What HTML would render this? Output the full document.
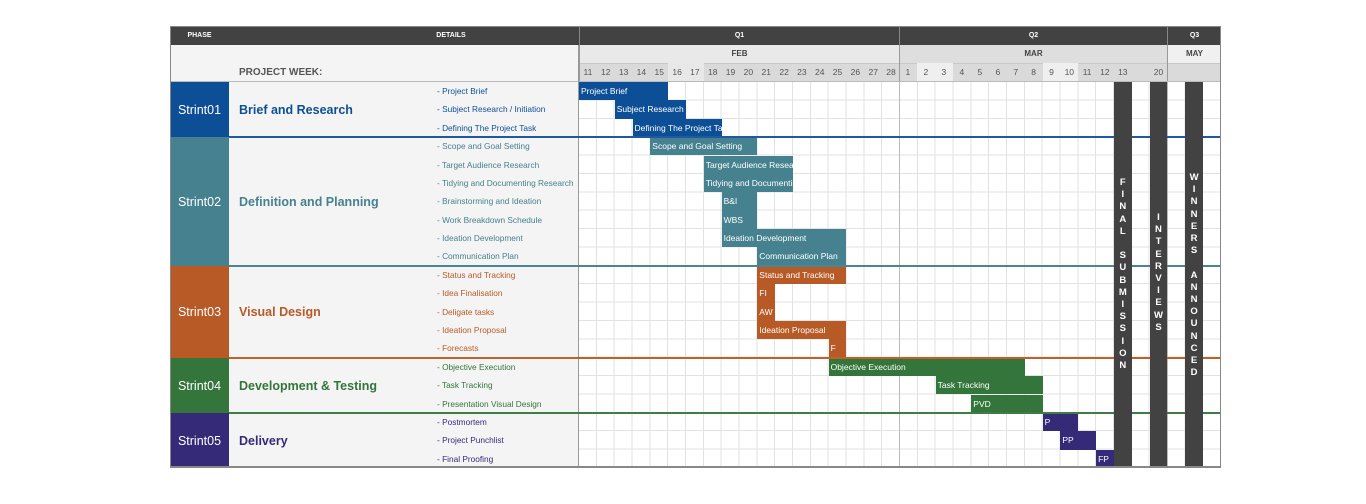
<!DOCTYPE html>
<html><head><meta charset="utf-8">
<style>
*{margin:0;padding:0;box-sizing:border-box}
body{width:1366px;height:504px;background:#fff;position:relative;overflow:hidden;font-family:"Liberation Sans",Arial,sans-serif}
.a{position:absolute}
.hdr{background:#424242;color:#fff;font-weight:bold;font-size:7px;text-align:center;line-height:19px}
.grid{left:579px;top:82px;width:642px;height:386px;background-color:#fff;
background-image:repeating-linear-gradient(to right,transparent 0,transparent 16.83px,#e2e2e2 16.83px,#e2e2e2 17.833px),
repeating-linear-gradient(to bottom,transparent 0,transparent 17.38px,#e2e2e2 17.38px,#e2e2e2 18.381px)}
.bar{position:absolute;color:#fff;font-size:8.5px;line-height:18px;padding-left:2px;white-space:nowrap;overflow:hidden;height:18.4px}
.det{position:absolute;left:437px;font-size:8.3px;line-height:18.4px;white-space:nowrap}
.ph{position:absolute;left:170px;width:59px;color:#fff;font-size:12.5px;display:flex;align-items:center;justify-content:center}
.tt{position:absolute;left:239px;font-size:12.5px;font-weight:bold;display:flex;align-items:center}
.sep{position:absolute;left:229px;width:992px;height:2px}
.vb{position:absolute;top:82px;height:386px;width:17.8px;background:#424242;color:#fff;font-weight:bold;font-size:9.5px;text-align:center;line-height:12.2px}
.wk{position:absolute;top:63px;height:19px;width:17.83px;font-size:8.5px;color:#555;text-align:center;line-height:19px}
</style></head><body>
<!-- left bg -->
<div class="a" style="left:170px;top:26px;width:409px;height:442px;background:#f4f4f4"></div>
<!-- header row -->
<div class="a hdr" style="left:170px;top:26px;width:1051px;height:19px"></div>
<div class="a hdr" style="left:170px;top:26px;width:59px;height:19px">PHASE</div>
<div class="a hdr" style="left:420px;top:26px;width:62px;height:19px">DETAILS</div>
<div class="a hdr" style="left:579px;top:26px;width:320px;height:19px;border-left:1px solid #888">Q1</div>
<div class="a hdr" style="left:899px;top:26px;width:268px;height:19px;border-left:1px solid #888">Q2</div>
<div class="a hdr" style="left:1167px;top:26px;width:54px;height:19px;border-left:1px solid #888">Q3</div>
<!-- month row -->
<div class="a" style="left:579px;top:45px;width:320px;height:18px;background:#e9e9e9;border-left:1px solid #999;font-size:8px;font-weight:bold;color:#444;text-align:center;line-height:18px">FEB</div>
<div class="a" style="left:899px;top:45px;width:268px;height:18px;background:#dedede;border-left:1px solid #999;font-size:8px;font-weight:bold;color:#444;text-align:center;line-height:18px">MAR</div>
<div class="a" style="left:1167px;top:45px;width:54px;height:18px;background:#f0f0f0;border-left:1px solid #999;font-size:8px;font-weight:bold;color:#444;text-align:center;line-height:18px">MAY</div>
<!-- week row -->
<div class="a" style="left:579px;top:63px;width:642px;height:19px;background:#dadada;border-top:1px solid #c8c8c8"></div>
<div class="a" style="left:668.2px;top:63px;width:35.7px;height:19px;background:#e8e8e8"></div>
<div class="a" style="left:917px;top:63px;width:35.7px;height:19px;background:#efefef"></div>
<div class="a" style="left:1042.6px;top:63px;width:35.7px;height:19px;background:#efefef"></div>
<div class="a" style="left:579px;top:63px;width:1px;height:19px;background:#999"></div>
<div class="a" style="left:899px;top:63px;width:1px;height:19px;background:#999"></div>
<div class="a" style="left:1167px;top:63px;width:1px;height:19px;background:#999"></div>
<div class="wk" style="left:579px">11</div><div class="wk" style="left:596.8px">12</div><div class="wk" style="left:614.7px">13</div><div class="wk" style="left:632.5px">14</div><div class="wk" style="left:650.3px">15</div><div class="wk" style="left:668.2px">16</div><div class="wk" style="left:686px">17</div><div class="wk" style="left:703.8px">18</div><div class="wk" style="left:721.6px">19</div><div class="wk" style="left:739.5px">20</div><div class="wk" style="left:757.3px">21</div><div class="wk" style="left:775.2px">22</div><div class="wk" style="left:793px">23</div><div class="wk" style="left:810.8px">24</div><div class="wk" style="left:828.6px">25</div><div class="wk" style="left:846.5px">26</div><div class="wk" style="left:864.3px">27</div><div class="wk" style="left:882.1px">28</div>
<div class="wk" style="left:899px">1</div><div class="wk" style="left:917px">2</div><div class="wk" style="left:935px">3</div><div class="wk" style="left:953px">4</div><div class="wk" style="left:971px">5</div><div class="wk" style="left:989px">6</div><div class="wk" style="left:1006.8px">7</div><div class="wk" style="left:1024.7px">8</div><div class="wk" style="left:1042.6px">9</div><div class="wk" style="left:1060.4px">10</div><div class="wk" style="left:1078.2px">11</div><div class="wk" style="left:1096px">12</div><div class="wk" style="left:1113.9px">13</div><div class="wk" style="left:1149.6px">20</div>
<div class="a" style="left:239px;top:63px;height:19px;line-height:20px;font-size:10px;font-weight:bold;color:#555">PROJECT WEEK:</div>
<div class="a" style="left:170px;top:81px;width:1051px;height:1px;background:#bbb"></div>
<!-- grid -->
<div class="a grid"></div>
<div class="a" style="left:578px;top:45px;width:1px;height:423px;background:#999"></div>
<div class="a" style="left:899px;top:82px;width:1px;height:386px;background:#bbb"></div>
<div class="a" style="left:1167px;top:82px;width:1px;height:386px;background:#bbb"></div>
<!-- phases -->
<div class="ph" style="top:82px;height:55px;background:#0d4f96">Strint01</div>
<div class="ph" style="top:137px;height:129px;background:#45818e">Strint02</div>
<div class="ph" style="top:266px;height:92px;background:#b85a26">Strint03</div>
<div class="ph" style="top:358px;height:55px;background:#33753a">Strint04</div>
<div class="ph" style="top:413px;height:55px;background:#352a78">Strint05</div>
<div class="tt" style="top:82px;height:55px;color:#0d4f96">Brief and Research</div>
<div class="tt" style="top:137px;height:129px;color:#45818e">Definition and Planning</div>
<div class="tt" style="top:266px;height:92px;color:#b85a26">Visual Design</div>
<div class="tt" style="top:358px;height:55px;color:#33753a">Development &amp; Testing</div>
<div class="tt" style="top:413px;height:55px;color:#352a78">Delivery</div>
<!-- details -->
<div class="det" style="top:82px;color:#0d4f96">- Project Brief</div>
<div class="det" style="top:100.4px;color:#0d4f96">- Subject Research / Initiation</div>
<div class="det" style="top:118.8px;color:#0d4f96">- Defining The Project Task</div>
<div class="det" style="top:137.1px;color:#45818e">- Scope and Goal Setting</div>
<div class="det" style="top:155.5px;color:#45818e">- Target Audience Research</div>
<div class="det" style="top:173.9px;color:#45818e">- Tidying and Documenting Research</div>
<div class="det" style="top:192.3px;color:#45818e">- Brainstorming and Ideation</div>
<div class="det" style="top:210.7px;color:#45818e">- Work Breakdown Schedule</div>
<div class="det" style="top:229px;color:#45818e">- Ideation Development</div>
<div class="det" style="top:247.4px;color:#45818e">- Communication Plan</div>
<div class="det" style="top:265.8px;color:#b85a26">- Status and Tracking</div>
<div class="det" style="top:284.2px;color:#b85a26">- Idea Finalisation</div>
<div class="det" style="top:302.6px;color:#b85a26">- Deligate tasks</div>
<div class="det" style="top:320.9px;color:#b85a26">- Ideation Proposal</div>
<div class="det" style="top:339.3px;color:#b85a26">- Forecasts</div>
<div class="det" style="top:357.7px;color:#33753a">- Objective Execution</div>
<div class="det" style="top:376.1px;color:#33753a">- Task Tracking</div>
<div class="det" style="top:394.5px;color:#33753a">- Presentation Visual Design</div>
<div class="det" style="top:412.8px;color:#352a78">- Postmortem</div>
<div class="det" style="top:431.2px;color:#352a78">- Project Punchlist</div>
<div class="det" style="top:449.6px;color:#352a78">- Final Proofing</div>
<!-- bars -->
<div class="bar" style="left:579px;top:82px;width:89.2px;background:#0d4f96">Project Brief</div>
<div class="bar" style="left:614.7px;top:100.4px;width:71.3px;background:#0d4f96">Subject Research</div>
<div class="bar" style="left:632.5px;top:118.8px;width:89.2px;background:#0d4f96">Defining The Project Task</div>
<div class="bar" style="left:650.3px;top:137.1px;width:107px;background:#45818e">Scope and Goal Setting</div>
<div class="bar" style="left:703.8px;top:155.5px;width:89.2px;background:#45818e">Target Audience Research</div>
<div class="bar" style="left:703.8px;top:173.9px;width:89.2px;background:#45818e">Tidying and Documenting</div>
<div class="bar" style="left:721.6px;top:192.3px;width:35.7px;background:#45818e">B&amp;I</div>
<div class="bar" style="left:721.6px;top:210.7px;width:35.7px;background:#45818e">WBS</div>
<div class="bar" style="left:721.6px;top:229px;width:124.9px;background:#45818e">Ideation Development</div>
<div class="bar" style="left:757.3px;top:247.4px;width:89.2px;background:#45818e">Communication Plan</div>
<div class="bar" style="left:757.3px;top:265.8px;width:89.2px;background:#b85a26">Status and Tracking</div>
<div class="bar" style="left:757.3px;top:284.2px;width:17.8px;background:#b85a26">FI</div>
<div class="bar" style="left:757.3px;top:302.6px;width:17.8px;background:#b85a26">AW</div>
<div class="bar" style="left:757.3px;top:320.9px;width:89.2px;background:#b85a26">Ideation Proposal</div>
<div class="bar" style="left:828.6px;top:339.3px;width:17.8px;background:#b85a26">F</div>
<div class="bar" style="left:828.6px;top:357.7px;width:196.2px;background:#33753a">Objective Execution</div>
<div class="bar" style="left:935.6px;top:376.1px;width:107px;background:#33753a">Task Tracking</div>
<div class="bar" style="left:971.3px;top:394.5px;width:71.3px;background:#33753a">PVD</div>
<div class="bar" style="left:1042.6px;top:412.8px;width:35.7px;background:#352a78">P</div>
<div class="bar" style="left:1060.4px;top:431.2px;width:35.7px;background:#352a78">PP</div>
<div class="bar" style="left:1096.1px;top:449.6px;width:17.8px;background:#352a78">FP</div>
<!-- separators -->
<div class="sep" style="top:136.3px;background:#1f5aa0"></div>
<div class="sep" style="top:264.8px;background:#4a8591"></div>
<div class="sep" style="top:356.7px;background:#c0612c"></div>
<div class="sep" style="top:411.8px;background:#3e7e44"></div>
<!-- vertical bars -->
<div class="vb" style="left:1113.9px;padding-top:95px">F<br>I<br>N<br>A<br>L<br>&nbsp;<br>S<br>U<br>B<br>M<br>I<br>S<br>S<br>I<br>O<br>N</div>
<div class="vb" style="left:1149.6px;padding-top:130px">I<br>N<br>T<br>E<br>R<br>V<br>I<br>E<br>W<br>S</div>
<div class="vb" style="left:1185.2px;padding-top:90px">W<br>I<br>N<br>N<br>E<br>R<br>S<br>&nbsp;<br>A<br>N<br>N<br>O<br>U<br>N<br>C<br>E<br>D</div>
<!-- border -->
<div class="a" style="left:170px;top:26px;width:1051px;height:442px;border:1px solid #888;border-bottom:2px solid #888"></div>
</body></html>
